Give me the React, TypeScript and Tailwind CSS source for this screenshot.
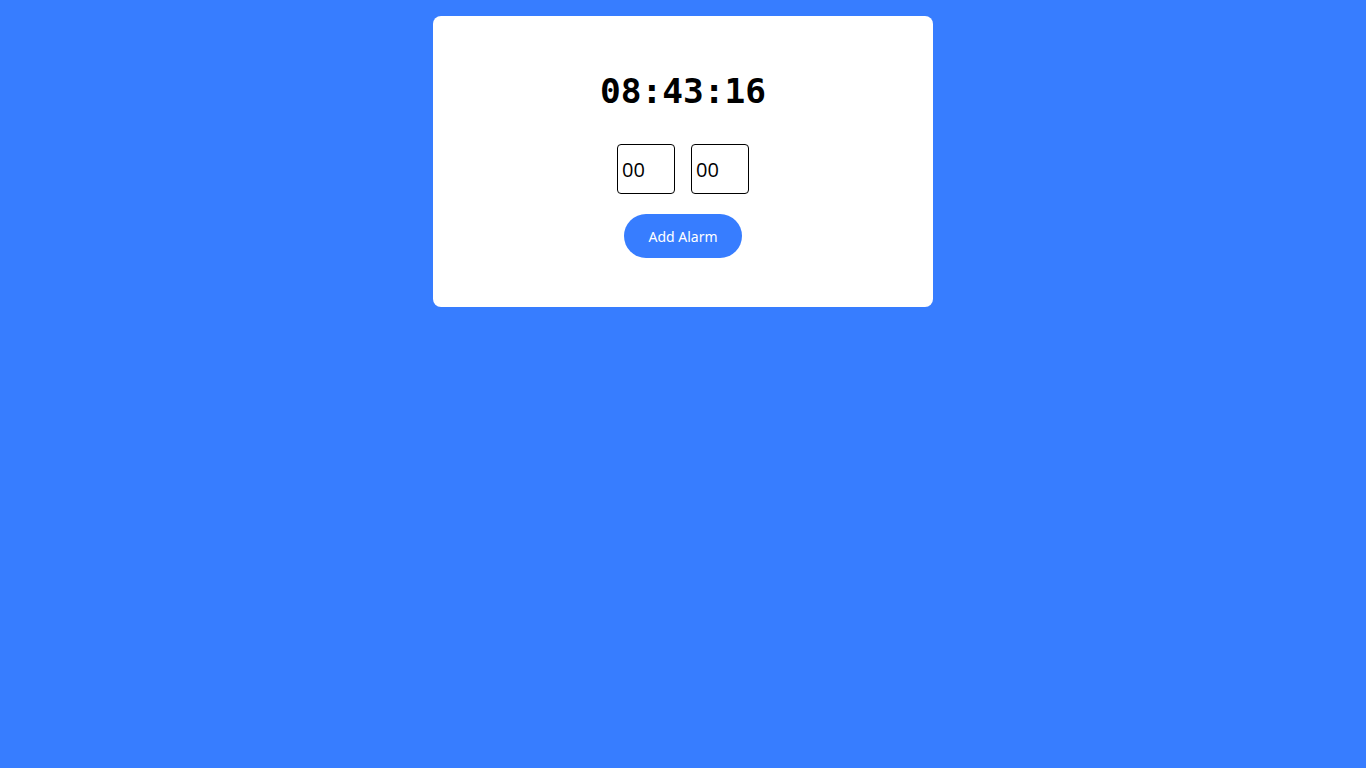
import React, { useState } from 'react';

const App = () => {
  const [hours, setHours] = useState('00');
  const [minutes, setMinutes] = useState('00');

  return (
    <div className="min-h-screen w-full bg-[#377dff] pt-4 font-['Inter',sans-serif]">
      <div className="mx-auto flex h-[291px] w-[500px] flex-col items-center rounded-lg bg-white pt-12">
        <div className="h-[54px] font-['DejaVu_Sans_Mono',monospace] text-[34.5px] font-bold leading-[54px] text-black">
          08:43:16
        </div>
        <div className="mt-[26px] flex gap-4">
          <input
            value={hours}
            onChange={(e) => setHours(e.target.value)}
            className="h-[50px] w-[58px] rounded border border-black px-1 font-['Open_Sans',sans-serif] text-[20px] text-black outline-none"
          />
          <input
            value={minutes}
            onChange={(e) => setMinutes(e.target.value)}
            className="h-[50px] w-[58px] rounded border border-black px-1 font-['Open_Sans',sans-serif] text-[20px] text-black outline-none"
          />
        </div>
        <button className="mt-5 h-[44px] w-[118px] rounded-full bg-[#377dff] font-['Noto_Sans',sans-serif] text-[14px] text-white">
          Add Alarm
        </button>
      </div>
    </div>
  );
};

export default App;
